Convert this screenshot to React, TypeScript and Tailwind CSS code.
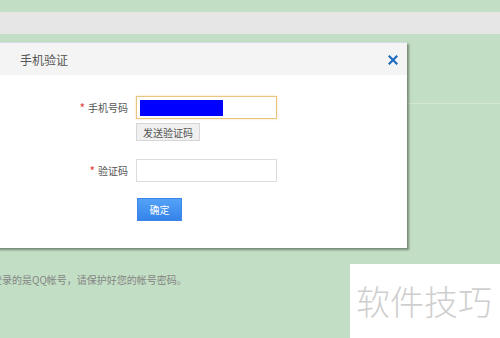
const FONT = "font-['Noto_Sans_CJK_SC','Noto_Sans',sans-serif]";

const CloseIcon = () => (
  <svg width="10" height="10" viewBox="0 0 10 10">
    <path d="M1.5 1.5 L8.5 8.5 M8.5 1.5 L1.5 8.5" stroke="#1f6cc0" strokeWidth="2.2" strokeLinecap="square" />
  </svg>
);

const Label = ({ text }: { text: string }) => (
  <div className="flex w-[148px] items-center justify-end gap-[3px] text-[10px] text-[#555]">
    <span className="text-[12px] leading-none text-[#e23c3c]">*</span>
    <span>{text}</span>
  </div>
);

export default function App() {
  return (
    <div className={`relative h-[338px] w-[500px] overflow-hidden bg-[#c2dec4] ${FONT}`}>
      {/* page behind the dialog */}
      <div className="pt-3">
        <div className="h-[22px] bg-[#e6e6e6]" />
      </div>
      <div className="mt-[69px] h-px bg-[#d4e8d5]" />
      <p className="ml-[-8px] mt-[169px] whitespace-nowrap text-[10px] leading-[14px] text-[#858585]">
        登录的是QQ帐号，请保护好您的帐号密码。
      </p>

      {/* dialog */}
      <div className="absolute left-[-20px] top-[42px] h-[206px] w-[427px] border-t border-[#cfdbe3] bg-white shadow-[2px_2px_2px_rgba(60,70,60,0.55)]">
        <div className="flex h-[32px] items-center justify-between bg-[#f4f4f4] pl-[40px] pr-[9px] pt-[2px]">
          <span className="text-[12px] text-[#555]">手机验证</span>
          <CloseIcon />
        </div>

        <div className="pt-[21px]">
          <div className="flex items-center gap-[8px]">
            <Label text="手机号码" />
            <div className="flex h-[23px] w-[141px] items-center border border-[#e8c47c] pl-[3px] shadow-[0_0_2px_rgba(232,196,124,0.6)]">
              <div className="h-[16px] w-[83px] bg-[#0000ff]" />
            </div>
          </div>
          <button className="ml-[156px] mt-[4px] flex h-[18px] w-[64px] items-center justify-center border border-[#d6d6d6] bg-[#f0f0f0] text-[10px] text-[#555]">
            发送验证码
          </button>

          <div className="mt-[18px] flex items-center gap-[8px]">
            <Label text="验证码" />
            <div className="h-[23px] w-[141px] border border-[#dcdcdc] bg-white" />
          </div>

          <button className="ml-[157px] mt-[16px] flex h-[23px] w-[45px] items-center justify-center border border-[#3b86e6] bg-gradient-to-b from-[#54a2f6] to-[#3583ea] text-[10px] text-white">
            确定
          </button>
        </div>
      </div>

      {/* watermark */}
      <div className="absolute left-[350px] top-[264px] flex h-[74px] w-[150px] items-center bg-white pl-[6px]">
        <span className="text-[34px] font-light leading-none text-[#cfcfcf]">软件技巧</span>
      </div>
    </div>
  );
}
